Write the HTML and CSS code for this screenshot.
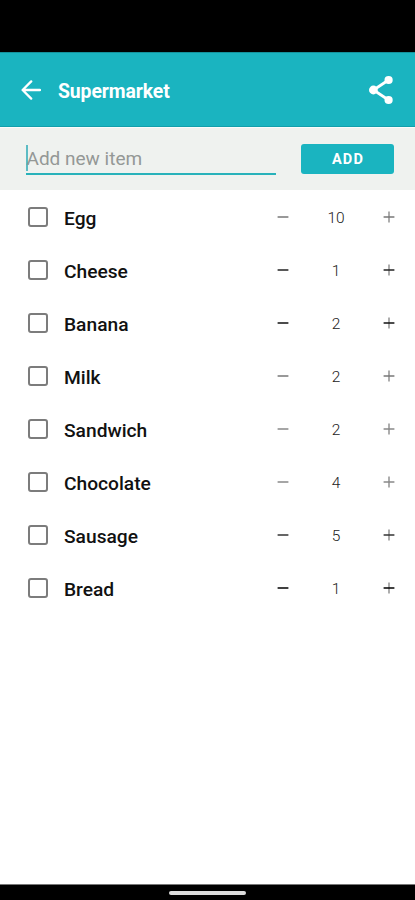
FILE: index.html
```html
<!DOCTYPE html>
<html lang="en">
<head>
<meta charset="utf-8">
<title>Supermarket</title>
<link rel="stylesheet" href="styles.css">
</head>
<body>
<div class="status-bar"></div>
<header class="app-bar">
  <svg class="back" viewBox="0 0 20 20"><path d="M19 10H2M10.2 1.4L1.6 10l8.6 8.6"/></svg>
  <h1 class="title">Supermarket</h1>
  <svg class="share" viewBox="0 0 24 30"><path d="M19.5 5L4.5 15l15 10"/><circle cx="19.6" cy="5" r="4.1"/><circle cx="4.4" cy="15" r="4.4"/><circle cx="19.6" cy="25" r="4.1"/></svg>
</header>
<div class="add-form">
  <div class="field"><span class="hint">Add new item</span></div>
  <button class="add">ADD</button>
</div>
<main class="list"></main>
<footer class="nav-bar"><div class="handle"></div></footer>
<script src="list.js"></script>
</body>
</html>
```

FILE: styles.css
```css
* { box-sizing: border-box; }
body {
  margin: 0;
  width: 415px;
  height: 900px;
  display: flex;
  flex-direction: column;
  overflow: hidden;
  background: #fff;
  color: #111;
  font-family: Roboto, "Liberation Sans", sans-serif;
}
.status-bar { height: 52px; flex: none; background: #000; }
.app-bar {
  flex: none;
  height: 75px;
  padding: 0 21px;
  display: flex;
  align-items: center;
  background: #1ab4c0;
  border-top: 1px solid #14929c;
  border-bottom: 1px solid #129fab;
  color: #fff;
}
.back { width: 20px; height: 20px; fill: none; stroke: #fff; stroke-width: 2.3; stroke-linecap: round; stroke-linejoin: round; }
.title { margin: 4px 0 0 17px; flex: 1; font-size: 19.4px; font-weight: 700; line-height: 24px; letter-spacing: -0.1px; }
.share { width: 24px; height: 30px; margin-right: 1px; fill: #fff; }
.share path { fill: none; stroke: #fff; stroke-width: 2.8; }
.add-form {
  flex: none;
  height: 63px;
  padding: 16px 21px 0 26px;
  display: flex;
  justify-content: space-between;
  align-items: flex-start;
  background: #eff2ef;
  border-top: 1px solid #fafcfa;
}
.field {
  width: 250px;
  height: 31px;
  display: flex;
  align-items: flex-start;
  padding-top: 1px;
  border-bottom: 2px solid #28b2ba;
}
.hint {
  height: 26px;
  line-height: 28px;
  border-left: 2px solid #5cbcc4;
  font-size: 19px;
  text-indent: -1.5px;
  color: #949896;
  white-space: nowrap;
}
.add {
  width: 93px;
  height: 30px;
  padding: 1px 0 0 1px;
  border: 0;
  border-radius: 3px;
  background: #1ab4c0;
  color: #fff;
  font: 700 14.5px/30px Roboto, sans-serif;
  letter-spacing: 1.2px;
}
.list { flex: 1; padding-top: 0.4px; }
.row {
  height: 53.06px;
  display: grid;
  grid-template-columns: 20px 1fr 12px 94px 12px;
  align-items: center;
  padding: 0 20px 0 28px;
}
.box { width: 20px; height: 20px; border: 2px solid #7c7c7c; border-radius: 3px; }
.name { padding: 4px 0 0 16px; font-size: 19.2px; font-weight: 500; line-height: 24px; }
.sign { width: 12px; height: 12px; fill: none; }
.count { padding-top: 2px; text-align: center; font-size: 15.5px; font-weight: 300; color: #222; }
.nav-bar { flex: none; height: 16px; background: #000; border-top: 1px solid #777; display: flex; justify-content: center; padding-top: 6px; }
.handle { width: 77px; height: 4px; border-radius: 2px; background: #ddd; }
```

FILE: list.js
```js
const items = [
  ["Egg", 10, "#777"], ["Cheese", 1, "#222"], ["Banana", 2, "#111"], ["Milk", 2, "#777"],
  ["Sandwich", 2, "#888"], ["Chocolate", 4, "#888"], ["Sausage", 5, "#333"], ["Bread", 1, "#000"]
];
const sign = (shade, plus) =>
  `<svg class="sign" viewBox="0 0 12 12">${plus ? '<path d="M6 .5V11.5" stroke="#999" stroke-width="1.6"/>' : ''}<path d="M.6 6H11.4" stroke="${shade}" stroke-width="1.5"/></svg>`;
document.querySelector(".list").innerHTML = items.map(([name, count, shade]) =>
  `<div class="row"><span class="box"></span><span class="name">${name}</span>${sign(shade, false)}<span class="count">${count}</span>${sign(shade, true)}</div>`
).join("");
```
